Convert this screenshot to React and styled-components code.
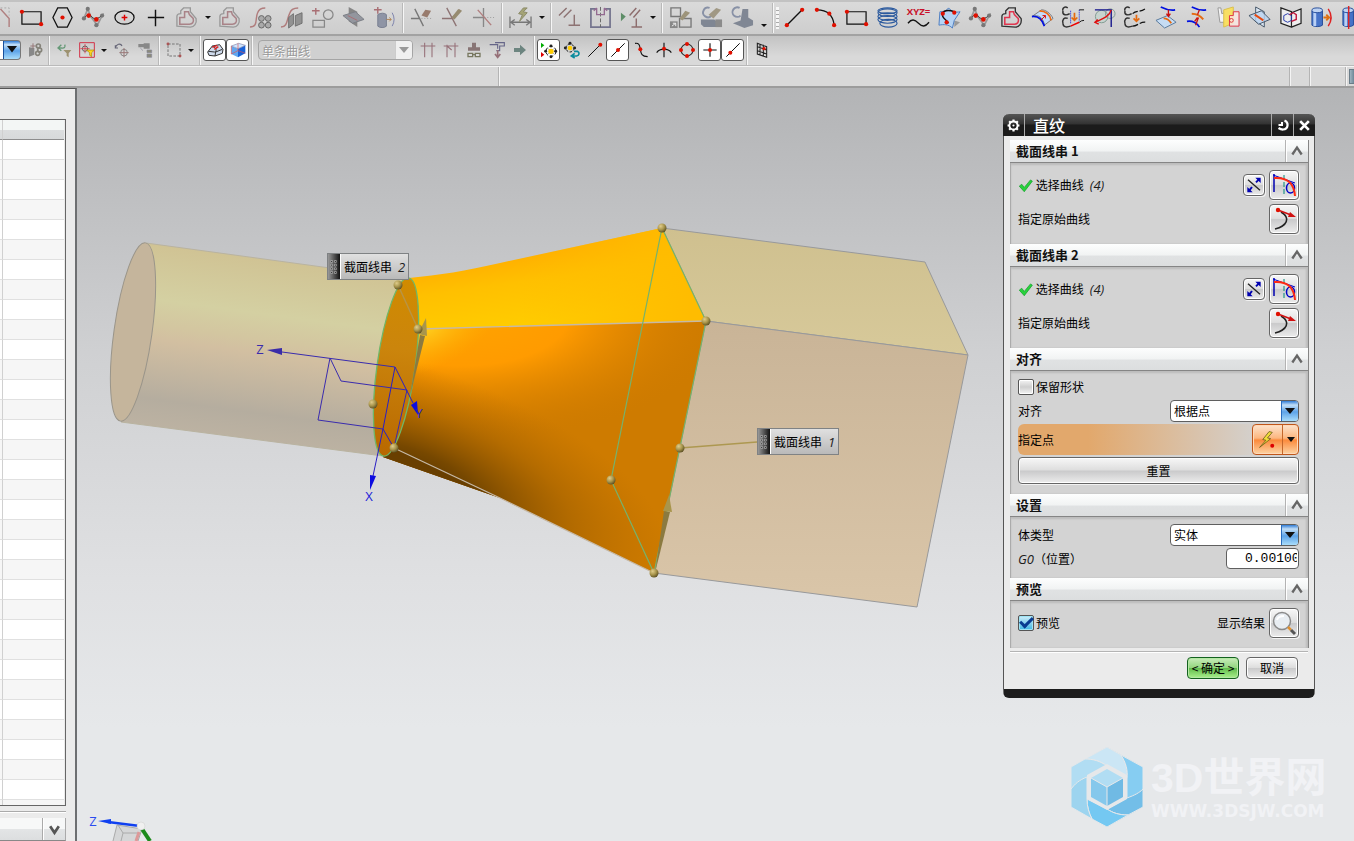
import React from 'react';
import styled, { createGlobalStyle, css } from 'styled-components';

const uiFont = '"Liberation Sans", "Noto Sans CJK SC", sans-serif';
const cjkFont = '"Noto Sans CJK SC", "Liberation Sans", sans-serif';
const latinFont = '"Open Sans", "Noto Sans", sans-serif';

const GlobalStyle = createGlobalStyle`
  * { box-sizing: border-box; }
  body {
    margin: 0;
    font-family: ${uiFont};
    font-size: 12px;
    color: #000;
    overflow: hidden;
  }
  button, input, select { font: inherit; color: inherit; }
`;

/* ---------- frame ---------- */

const Page = styled.div`
  display: flex;
  flex-direction: column;
  height: 100vh;
  background: #d9d9d9;
`;
const Toolbar = styled.div`
  display: flex;
  align-items: center;
  flex: none;
  height: 36px;
  padding-bottom: 1px;
  overflow: hidden;
  border-top: 2px solid #c2c2c2;
  border-bottom: 2px solid #a2a2a2;
  background: linear-gradient(#dadada, #cdcdcd);
`;
const SelectionBar = styled(Toolbar)`
  height: 30px;
  border-top: 0;
  border-bottom: 1px solid #bababa;
  background: linear-gradient(#c3c3c3, #d9d9d9 70%);
`;
const CueLine = styled.div`
  display: flex;
  flex: none;
  height: 22px;
  border-top: 1px solid #f4f4f4;
  border-bottom: 2px solid #9c9c9c;
  background: #d9d9d9;
`;
const CueCell = styled.div`
  flex: ${({ $width }) => ($width ? `0 0 ${$width}px` : '1')};
  overflow: hidden;
  border-right: 1px solid #f4f4f4;
  box-shadow: inset -1px 0 #b4b4b4;
`;
const CueButton = styled.button`
  width: 5px;
  margin: 2px 0 2px 2px;
  padding: 0;
  border: 1px solid #6a7c88;
  border-right: 0;
  background: linear-gradient(90deg, #9fb4c0, #6d8797);
`;
const Tool = styled.button`
  display: flex;
  flex: none;
  align-items: center;
  justify-content: center;
  width: 31px;
  height: 28px;
  padding: 0;
  border: 0;
  background: none;
  ${({ $edge }) => $edge && css`margin-left: -15px;`}
`;
const SmallTool = styled(Tool)`
  width: 23px;
  height: 22px;
  ${({ $pressed }) => $pressed && css`
    border: 1px solid #555;
    border-radius: 3px;
    background: #fff;
  `}
`;
const DropArrow = styled.button`
  flex: none;
  width: 12px;
  height: 28px;
  padding: 0;
  border: 0;
  background: none;
  &::after {
    content: '';
    display: block;
    margin: ${({ $low }) => ($low ? '16px' : '0')} auto 0;
    width: 0;
    border: 3px solid transparent;
    border-top-color: #111;
    border-bottom: 0;
  }
`;
const Separator = styled.span`
  flex: none;
  width: 2px;
  height: 30px;
  margin: 0 2px;
  border-left: 1px solid #b9b9b9;
  border-right: 1px solid #f6f6f6;
`;
const Grip = styled.span`
  flex: none;
  width: 3px;
  height: 22px;
  background: repeating-linear-gradient(#f6f6f6 0 3px, #aaa 3px 4px);
`;
const ComboEnd = styled.button`
  flex: none;
  width: 21px;
  height: 20px;
  margin-right: 2px;
  padding: 0 0 0 3px;
  border: 1px solid #777;
  border-left: 0;
  border-radius: 0 4px 4px 0;
  background: linear-gradient(90deg, #fff 3px, #174f9c 3px 4px, transparent 4px), linear-gradient(#2f7cd6, #c2def6 20%, #5da3e8 55%, #a9ddfb);
`;

/* ---------- navigator ---------- */

const Workspace = styled.div`
  display: flex;
  flex: 1;
  min-height: 0;
`;
const Sidebar = styled.aside`
  display: flex;
  flex: none;
  flex-direction: column;
  width: 77px;
  border-top: 1px solid #555;
  border-right: 2px solid #6d6f71;
  background: #ebebeb;
`;
const TreeBox = styled.div`
  flex: 1;
  width: 66px;
  min-height: 0;
  margin-top: 30px;
  overflow: hidden;
  border: 1px solid #666;
  border-left: 0;
`;
const Tree = styled.table`
  width: 64px;
  border-collapse: separate;
  border-spacing: 0;
  table-layout: fixed;
  th, td {
    height: 20px;
    padding: 0;
    border-bottom: 1px solid #e0e0e0;
  }
  th {
    border-bottom-color: #8d8d8d;
    background: linear-gradient(#f3f6f5 50%, #dcdedf 50%, #d7d9da);
  }
  th:first-child, td:first-child {
    width: 3px;
    border-right: 1px solid #d0d0d0;
  }
  tbody tr { background: #fff; }
  tbody tr:nth-child(even) { background: #f6f6f6; }
`;
const SidebarLine = styled.div`
  width: 66px;
  height: 2px;
  margin-top: 5px;
  border-top: 1px solid #aaa;
  border-bottom: 1px solid #fff;
`;
const SectionBar = styled.button`
  display: flex;
  justify-content: flex-end;
  width: 66px;
  height: 23px;
  margin-top: 5px;
  padding: 0;
  border: 0;
  border-right: 1px solid #aaa;
  border-bottom: 1px solid #888;
  background: linear-gradient(#f7f8f8 50%, #e3e5e6 50%, #dcdedf);
`;
const ChevronCell = styled.span`
  display: flex;
  align-items: center;
  justify-content: center;
  width: 23px;
  height: 100%;
  border-left: 1px solid #aaa;
  box-shadow: inset 1px 0 #fff;
`;

/* ---------- viewport ---------- */

const Viewport = styled.main`
  position: relative;
  flex: 1;
  min-width: 0;
  overflow: hidden;
  background: linear-gradient(#b3b4b6, #cfd0d2 35%, #dfe0e2 65%, #e6e8ea 85%, #e6e8ea);
`;
const Scene = styled.svg`
  position: absolute;
  top: 0;
  left: 0;
  font-family: ${latinFont};
`;
const Triad = styled.svg`
  position: absolute;
  bottom: 0;
  left: 0;
  font-family: ${latinFont};
`;
const SceneLabel = styled.div`
  position: absolute;
  top: ${({ $y }) => $y}px;
  left: ${({ $x }) => $x}px;
  display: flex;
  align-items: center;
  gap: 3px;
  width: 82px;
  height: 27px;
  border: 1px solid #7f8284;
  font-family: ${cjkFont};
  line-height: 24px;
  white-space: nowrap;
  background: linear-gradient(#e0e0e0, #b9b9b9);
`;
const LabelGrip = styled.svg`
  flex: none;
  border-right: 1px solid #fff;
  background: linear-gradient(90deg, #999, #111);
`;
const Num = styled.em`
  margin-left: ${({ $gap }) => $gap || 0}px;
  font-family: ${latinFont};
  font-size: 13px;
  color: #1c1c1c;
`;
const Watermark = styled.div`
  position: absolute;
  right: 24px;
  bottom: 13px;
  display: flex;
  align-items: center;
  gap: 8px;
  color: #f1f2f5;
`;
const WatermarkText = styled.div`
  width: 179px;
  font-weight: 700;
  white-space: nowrap;
`;
const WatermarkName = styled.div`
  font-size: 41px;
  line-height: 47px;
`;
const WatermarkUrl = styled.div`
  font-family: "DejaVu Sans", sans-serif;
  font-size: 17px;
  line-height: 18px;
`;

/* ---------- dialog ---------- */

const Dialog = styled.section`
  position: absolute;
  top: 26px;
  right: 39px;
  width: 312px;
  border: 1px solid #555;
  border-top: 0;
  border-bottom: 9px solid #1d1d1d;
  border-radius: 6px;
  background: #ebebeb;
  font-family: ${cjkFont};
  line-height: 18px;
`;
const TitleBar = styled.header`
  display: flex;
  align-items: center;
  height: 22px;
  margin: 0 -1px;
  border-radius: 6px 6px 0 0;
  color: #fff;
  background: linear-gradient(#555, #333 45%, #1b1b1b 50%, #1b1b1b);
`;
const Title = styled.h1`
  flex: 1;
  margin: 0;
  padding-left: 8px;
  font-size: 16px;
  font-weight: 500;
  line-height: 20px;
`;
const TitleButton = styled.button`
  display: flex;
  align-items: center;
  justify-content: center;
  width: 22px;
  height: 22px;
  padding: 0;
  border: 0;
  background: none;
  border-left: ${({ $line }) => ($line === 'left' ? '1px solid #aaa' : '0')};
  border-right: ${({ $line }) => ($line === 'right' ? '1px solid #aaa' : '0')};
`;
const Groups = styled.div`
  margin: 4px 5px 0 6px;
  border-right: 1px solid #858585;
`;
const GroupHeader = styled.h2`
  display: flex;
  align-items: center;
  justify-content: space-between;
  height: 23px;
  margin: 0;
  padding-left: 6px;
  border-bottom: 1px solid #858585;
  font-size: 13px;
  font-weight: 700;
  color: #111;
  background: linear-gradient(#fdfefe, #f1f3f3 50%, #e0e2e3 55%, #dcdedf);
`;
const Fold = styled.button`
  display: flex;
  align-items: center;
  justify-content: center;
  width: 23px;
  height: 22px;
  padding: 0;
  border: 0;
  border-left: 1px solid #b3b3b3;
  box-shadow: inset 1px 0 #fff;
  background: none;
`;
const GroupBody = styled.div`
  display: flex;
  flex-direction: column;
  gap: ${({ $gap }) => $gap || 2}px;
  padding: ${({ $top }) => $top || 7}px 9px ${({ $bottom }) => $bottom || 10}px 7px;
  border-left: 1px solid #ababab;
  background: #d3d3d3;
  box-shadow: inset 0 2px 2px #bcbcbc, inset -2px 0 2px #bcbcbc;
`;
const Row = styled.div`
  display: flex;
  align-items: center;
  justify-content: space-between;
  height: ${({ $height }) => $height || 30}px;
`;
const PointRow = styled(Row)`
  border-radius: 6px;
  background: linear-gradient(90deg, #e2a86c 25%, #d3d3d3 88%);
`;
const Step = styled.span`
  display: flex;
  align-items: center;
`;
const Tools = styled.span`
  display: flex;
  align-items: center;
  gap: 4px;
`;
const buttonFace = css`
  border: 1px solid #666;
  border-radius: 4px;
  box-shadow: inset 0 0 0 1px #fff, 1px 1px #f2f2f2;
  background: linear-gradient(#f7f7f7, #dedede 48%, #cacacb 52%, #ececec);
`;
const IconButton = styled.button`
  ${buttonFace}
  display: flex;
  align-items: center;
  justify-content: center;
  width: ${({ $size }) => $size}px;
  height: ${({ $size }) => $size}px;
  padding: 0;
`;
const TextButton = styled.button`
  ${buttonFace}
  width: ${({ $wide }) => ($wide ? '100%' : '52px')};
  height: ${({ $wide }) => ($wide ? '27px' : '22px')};
  padding: 0;
  font-family: ${cjkFont};
  line-height: 18px;
  white-space: nowrap;
`;
const OkButton = styled(TextButton)`
  border-color: #14611f;
  background: linear-gradient(#c9ecbb, #93d67f 48%, #62bc4d 52%, #a9f08c);
  box-shadow: inset 0 0 0 1px #b4e8a3, 1px 1px #f2f2f2;
`;
const Check = styled.input`
  appearance: none;
  width: 16px;
  height: 16px;
  margin: 0 2px 0 0;
  border: 1px solid #555;
  border-radius: 2px;
  box-shadow: inset 0 0 0 1px #fff;
  background: linear-gradient(#f4f4f4, #cfcfcf 50%, #f4f4f4);
  &:checked {
    display: grid;
    place-items: center;
    box-shadow: inset 0 0 0 1px #9fe4f4;
    background: linear-gradient(#cfeefa, #3fb7e3);
  }
  &:checked::after {
    content: '';
    width: 10px;
    height: 5px;
    margin-top: -4px;
    border-left: 3px solid #0a3d91;
    border-bottom: 3px solid #0a3d91;
    transform: rotate(-45deg);
  }
`;
const SelectFrame = styled.span`
  display: flex;
  flex: none;
  width: ${({ $width }) => $width}px;
  height: ${({ $height }) => $height || 22}px;
  margin: 0 ${({ $margin }) => $margin || 0}px;
  overflow: hidden;
  border: 1px solid ${({ $off }) => ($off ? '#a5a5a5' : '#5f5f5f')};
  border-radius: 4px;
  background: ${({ $off }) => ($off ? '#d0d0d0' : '#fff')};
`;
const SelectBox = styled.select`
  appearance: none;
  flex: 1;
  min-width: 0;
  padding: 0 3px;
  border: 0;
  background: none;
  font-family: ${cjkFont};
  color: #000;
  opacity: 1;
  &:disabled {
    color: #999;
    text-shadow: 1px 1px #fff;
  }
`;
const SelectArrow = styled.span`
  display: flex;
  align-items: center;
  justify-content: center;
  width: 17px;
  border-left: 1px solid ${({ $off }) => ($off ? '#ccc' : '#2a6ec0')};
  background: ${({ $off }) => ($off ? '#f0f0f0' : 'linear-gradient(#2f7cd6, #c2def6 20%, #5da3e8 55%, #a9ddfb)')};
  &::after {
    content: '';
    border: 5px solid transparent;
    border-top: 6px solid ${({ $off }) => ($off ? '#999' : '#111')};
    border-bottom: 0;
  }
`;
const PointButton = styled.button`
  display: flex;
  align-items: center;
  width: 47px;
  height: 31px;
  padding: 0;
  border: 1px solid #c0561a;
  border-radius: 4px;
  box-shadow: inset 0 0 0 1px #ffd9b8;
  background: linear-gradient(#fde3cc, #fcb67f 45%, #fb8a3c 52%, #fdd3a4);
`;
const PointIcon = styled.span`
  display: flex;
  align-items: center;
  justify-content: center;
  width: 29px;
`;
const PointDrop = styled.span`
  flex: 1;
  height: 100%;
  padding-top: 12px;
  border-left: 1px solid #c4672b;
  &::after {
    content: '';
    display: block;
    width: 0;
    margin: 0 auto;
    border: 4px solid transparent;
    border-top: 5px solid #111;
    border-bottom: 0;
  }
`;
const NumberBox = styled.input`
  width: 73px;
  height: 21px;
  padding: 0 1px 0 18px;
  border: 1px solid #5f5f5f;
  border-radius: 4px;
  font-family: "Liberation Mono", monospace;
  font-size: 13px;
  background: #fff;
`;
const Actions = styled.footer`
  display: flex;
  justify-content: flex-end;
  gap: 7px;
  margin: 3px 6px 0;
  padding: 5px 10px 10px 0;
  border-top: 1px solid #b4b4b4;
  box-shadow: inset 0 1px #fff;
`;

/* ---------- icons, drawn on a 24 unit grid ---------- */

const Dot = ({ x, y, c = '#e01000', r = 2.2 }) => <circle cx={x} cy={y} r={r} fill={c} stroke="none" />;

const splineArt = (
  <>
    <path d="M2 13 6 3l3 8 7 9 5-10" stroke="#999" strokeWidth="1.800" />
    <path d="M2 13c4-5 6-5 8-2s7 4 12-3" stroke="#222" />
    <Dot x={2} y={13} c="#777" /><Dot x={6} y={3} c="#777" /><Dot x={15} y={20} c="#777" /><Dot x={21} y={10} c="#777" />
    <Dot x={7} y={10} r={2.4} /><Dot x={15} y={14} r={2.4} />
  </>
);
const offsetArt = (outer, inner) => (
  <>
    <path d="M2 21v-10c0-2 1-3 4-3V5l3-3h7v4l6 7c1 5-2 9-6 9z" stroke={outer} strokeWidth="1.400" />
    <path d="M5 19v-7h5V6h4l1 3 4 4c1 4-1 6-4 6z" stroke={inner} strokeWidth="1.600" />
  </>
);
const tube = (
  <>
    <path d="M2 5v15c2 2 9 2 11 0V5" fill="#4673c8" stroke="#234a99" />
    <path d="M5 6v15" stroke="#b9d0f5" strokeWidth="3" />
    <ellipse cx="7.500" cy="4.500" rx="5.500" ry="2.500" fill="#bdd2f2" stroke="#234a99" />
  </>
);
const wave = <path d="M1 5c-1 5 4 5 7 3M6 2C3 0 0 2 1 5M6 13c-4-2-6 2-5 5M1 18c0 5 5 4 8 3" stroke="#333" strokeWidth="1.500" />;

const icons = {
  corner: <><path d="M12 2h9v8" stroke="#aaa" strokeDasharray="2 2" /><path d="M12 3 21 13v9" stroke="#b08080" strokeWidth="1.500" /></>,
  rect: <><path d="M2 6h20v13H2z" stroke="#111" strokeWidth="1.300" /><Dot x={2} y={6} /><Dot x={22} y={19} /></>,
  hexagon: <><path d="M7 2h10l5 10-5 10H7L2 12z" stroke="#111" strokeWidth="1.300" /><Dot x={12} y={12} /></>,
  spline: splineArt,
  ellipse: <><ellipse cx="12" cy="12" rx="10" ry="7" stroke="#111" strokeWidth="1.300" /><path d="M12 9v6M9 12h6" stroke="#d00" strokeWidth="1.500" /></>,
  plus: <path d="M12 4v17M4 12h17" stroke="#111" strokeWidth="1.500" />,
  offsetOff: offsetArt('#999', '#a98388'),
  offset: offsetArt('#333', '#e0364f'),
  pattern: <><path d="M1 22c9 0 5-9 8-15 1-3 4-5 8-5" stroke="#b07d7d" strokeWidth="1.500" /><g fill="#aaa" stroke="#666"><circle cx="13" cy="13" r="3" /><circle cx="20" cy="13" r="3" /><circle cx="13" cy="20" r="3" /><circle cx="20" cy="20" r="3" /></g></>,
  project: <><path d="M1 22c7 0 6-8 9-14 1-4 4-6 9-6" stroke="#b07d7d" strokeWidth="1.500" /><path d="m9 12 5-4v11l-5 4zm7-2 7-3v11l-7 3z" fill="#929292" stroke="#707070" /></>,
  shapes: <><path d="M5 2v7M1 5h8" stroke="#a96f74" strokeWidth="1.500" /><circle cx="18" cy="9" r="5" stroke="#888" strokeWidth="1.300" /><path d="M2 15h12v7H2z" stroke="#888" strokeWidth="1.300" /></>,
  surfaceOff: <><path d="m7 1 9 5v16l-9-6z" fill="#868686" /><path d="m1 10 13-4 9 8-12 4z" fill="#93969e" stroke="#7a7d85" /><path d="m6 10 10 5" stroke="#a96f74" /></>,
  extrudeOff: <><path d="M5 1v7M1 4h8" stroke="#a96f74" strokeWidth="1.500" /><path d="M5 9c3-2 7-2 9 0v12c-2 2-7 2-9 0z" fill="#8e94a5" stroke="#787e90" /><path d="M14 14h5m-2-2 2 2-2 2" stroke="#b08350" /><path d="M20 7q4 7 0 14" stroke="#7a7faa" /></>,
  erase: <><path d="M5 3 14 21M1 13h9" stroke="#777" strokeWidth="1.400" /><path d="M12 13h12" stroke="#999" strokeDasharray="1 2" /><path d="m12 10 4-6 6 1-4 7z" fill="#987b6d" /></>,
  pencil: <><path d="M6 2 16 21M1 13h10l9-9" stroke="#8d7373" strokeWidth="1.400" /><path d="m11 12 7-9 4 2-8 9z" fill="#968b70" /></>,
  cross: <><path d="M12 2v20M1 12h12" stroke="#888" strokeWidth="1.400" /><path d="M13 12h10" stroke="#999" strokeDasharray="1 2" /><path d="m6 4 14 16" stroke="#b07d7d" strokeWidth="1.400" /></>,
  dimension: <><path d="M1 11v12M23 11v12M2 17h20M6 14l-4 3 4 3m12-6 4 3-4 3" stroke="#777" strokeWidth="1.400" /><path d="m15 2-5 6 4 1-3 7 8-9-4-1 4-4z" fill="#a5a476" stroke="#8a8a68" /></>,
  constraint: <><path d="M1 10 9 2M6 12l8-8" stroke="#8d7373" strokeWidth="1.500" /><path d="M11 20h12M17 9v11" stroke="#8d7373" strokeWidth="1.500" /></>,
  mirror: <><path d="M7 3H2v19h20V3h-5" stroke="#74748e" strokeWidth="1.800" /><path d="M12 1v21" stroke="#666" strokeDasharray="4 2" /><path d="M8 2v7h8V2M5 5l3-3m8 0 3 3" stroke="#946b91" strokeWidth="1.400" /></>,
  auto: <><path d="M1 7v9l5-5z" fill="#5d8d67" /><path d="m10 10 7-8m-3 10 7-8M12 22h11M17 13v9" stroke="#8d6d6d" strokeWidth="1.500" /></>,
  convert: <><path d="M2 2h10v9H2zm9 11h12v9H11z" stroke="#777" strokeWidth="1.400" /><path d="m11 13 6-8 5 2-8 8z" fill="#9d947a" /><path d="M1 16h8v7H1z" fill="#888" /><path d="m3 21 4-3m-3 0h3v3" stroke="#eee" /></>,
  stampOff: <><path d="M10 2a5 5 0 1 0 2 8" stroke="#8891a6" strokeWidth="2" /><path d="m9 9 8-7 5 2-8 9z" fill="#a09884" /><path d="M1 14h14l3 3v5H4l-3-3z" fill="#7f8693" /><path d="M16 14h7v8h-7z" fill="#8b8b8b" /></>,
  stamp: <><path d="M9 2a5 5 0 1 0 1 8" stroke="#8891a6" strokeWidth="2" /><path d="M12 3h6v9l5 3v5l-9 3-12-5 8-3z" fill="#808794" /></>,
  line: <><path d="M4 20 20 4" stroke="#111" strokeWidth="1.400" /><Dot x={4} y={20} /><Dot x={20} y={4} /></>,
  arc: <><path d="M3 4c11 0 17 6 18 16" stroke="#111" strokeWidth="1.400" /><Dot x={3} y={4} /><Dot x={16} y={8} /><Dot x={21} y={20} /></>,
  helix: <g stroke="#2c5a9e" strokeWidth="1.200"><ellipse cx="12" cy="5" rx="10" ry="3" /><ellipse cx="12" cy="7" rx="10" ry="4" /><ellipse cx="12" cy="11" rx="10" ry="4" /><ellipse cx="12" cy="14" rx="10" ry="4" /><ellipse cx="13" cy="18" rx="9" ry="4" /></g>,
  law: <><text x="12" y="9" textAnchor="middle" fontSize="10" fontWeight="700" fontFamily="Open Sans, sans-serif" fill="#c8102a">XYZ=</text><path d="M1 18c4-5 7-4 11 0s7 4 11-1" stroke="#111" strokeWidth="1.400" /></>,
  surfaceCurve: <><path d="m17 15 6 2-6 5z" fill="#999" /><path d="M2 6c4 0 7-1 9-4 3 4 8 5 12 4l-6 9-2 8C11 19 6 19 1 20z" fill="#b5d3f3" stroke="#4c7cc0" /><path d="M17 6C8 3 3 6 5 11c1 3 4 3 6 7" stroke="#111" strokeWidth="1.500" /><Dot x={17} y={7} /><Dot x={5} y={8} /><Dot x={9} y={17} /></>,
  offsetSurface: <><path d="M1 11C8 8 13 13 14 20l9-7C20 7 15 4 11 4z" fill="#c4dbf7" stroke="#777" /><path d="M1 11c7-1 11 4 13 10" stroke="#0010e0" strokeWidth="1.800" /><path d="M9 5c6 0 11 4 12 10" stroke="#f06a10" strokeWidth="1.800" /><path d="m10 15 5-5m-3 0h3v3" stroke="#d00" /></>,
  bridge: <>{wave}<path d="m9 21 9-4" stroke="#e00" strokeWidth="1.600" /><path d="M9 5v14m9-15v12" stroke="#0010e0" strokeDasharray="1 1" /><path d="M13 7v7m-3-2 3 3 3-3" stroke="#e56a10" strokeWidth="1.800" /><path d="M18 4h5m-5 13q2-2 5-2" stroke="#111" /></>,
  combine: <><circle cx="9" cy="11" r="6.500" fill="#c8d4cf" stroke="#7f9a90" /><circle cx="18" cy="8" r="5" stroke="#7f9a90" /><path d="M2 4h17v18" stroke="#10108a" strokeWidth="1.400" /><path d="M2 17c6-3 15-5 17-13M5 14l-3 3 4 2" stroke="#d11" strokeWidth="1.500" /></>,
  join: <>{wave}<path d="M9 8c4-4 7-1 13-5M9 21c5 0 8-5 14-4" stroke="#111" strokeWidth="1.300" strokeDasharray="6 2" /><path d="M13 9v6m-3-2 3 3 3-3" stroke="#e56a10" strokeWidth="1.800" /></>,
  projectCurve: <><path d="m1 15 12-5 9 7-12 6z" fill="#c6dcf3" stroke="#56779b" /><path d="M9 13c4 0 6 2 8 5" stroke="#e56a10" strokeWidth="1.800" /><path d="M6 1c4 2 9 4 15 3" stroke="#0010e0" strokeWidth="1.800" /><path d="M14 4v7m-2-3 2 3 2-3" stroke="#c11" strokeWidth="1.400" /></>,
  combineCurve: <><path d="M6 1c4 2 9 4 15 3M1 16c6-1 11 2 13 6" stroke="#0010e0" strokeWidth="1.700" /><path d="M6 8c5 0 9 2 12 6" stroke="#e56a10" strokeWidth="2" /><path d="M14 4 12 9m-2 11 3-8M9 16l3-4" stroke="#c11" strokeWidth="1.400" /></>,
  mirrorCurve: <><path d="M1 2h3l1 6 3-1v10H3z" fill="#f4f4f4" stroke="#999" /><path d="m7 4 10-3v17L7 22z" fill="#f8df62" stroke="#d8bf4d" /><path d="M13 10h4V6h6v15H13z" fill="#fbe9e4" fillOpacity=".8" stroke="#dd3344" /><circle cx="15" cy="15" r="2" stroke="#dd3344" /></>,
  intersect: <><path d="m8 1 9 5v16l-9-6z" fill="#d9e6f3" stroke="#456" /><path d="m1 10 13-5 9 9-12 5z" fill="#bcd5f0" stroke="#456" fillOpacity=".8" /><path d="m7 9 9 6" stroke="#e54a10" strokeWidth="2" /></>,
  section: <><path d="M2 2 13 6v16L2 18zm11 5 10-4v15l-10 4" fill="#eee" stroke="#222" strokeWidth="1.300" /><path d="m5 10 4-2 4 2v5l-4 2-4-2z" stroke="#2338aa" /><path d="m11 9 4-2 3 2v5l-5 2" stroke="#c2183e" strokeWidth="1.500" /></>,
  extract: <>{tube}<path d="M14 12h6m-3-3 3 3-3 3" stroke="#e07010" strokeWidth="2" /><path d="M19 3q6 9 0 18" stroke="#d22" strokeWidth="1.500" /></>,
  tubeCut: <>{tube}<path d="M8 0v24" stroke="#d22" strokeWidth="1.500" /></>,
  // selection bar
  layers: <><path d="M3 8v14l8-3V9z" fill="#888" /><path d="M9 2v8M5 6h8" stroke="#967878" strokeWidth="1.500" /><g stroke="#85837a" strokeWidth="2.500"><circle cx="17" cy="6" r="3" /><circle cx="19" cy="12" r="3" /><circle cx="16" cy="17" r="3" /></g></>,
  filterBack: <><path d="M13 4c2 4-1 6-5 5H4m4-5L3 9l5 4" stroke="#697" strokeWidth="2" /><path d="M11 12h12l-4 5v6l-3-2v-4z" fill="#9d9270" /></>,
  filterSnap: <><path d="M1 1h22v22H1z" stroke="#d23349" strokeWidth="1.500" /><circle cx="9" cy="10" r="4" stroke="#333" /><path d="M9 3v14M2 10h14" stroke="#d23" /><path d="M11 12h12l-4 4v6l-3-2v-4z" fill="#ffd71c" stroke="#a98300" /></>,
  undoSnap: <><path d="M2 9c1-6 8-8 10-3M2 5v4h4" stroke="#667" strokeWidth="1.700" /><circle cx="15" cy="16" r="5" stroke="#888" strokeWidth="1.500" /><path d="M15 9v14M8 16h14" stroke="#977" strokeWidth="1.500" /></>,
  paint: <><path d="M2 3h10v5H2zm8-1h9v8h-9z" fill="#888" /><path d="m5 9 4 4M15 12h7v4h-7zm0 6h7v5h-7z" stroke="#889" fill="#8a8a7a" /></>,
  lasso: <><path d="M3 3h18v18H3z" stroke="#777" strokeWidth="1.500" strokeDasharray="4 2" /><Dot x={3} y={3} c="#a55" /><Dot x={21} y={21} c="#a55" /></>,
  clipPart: <><path d="M1 15 8 6l11-2 5 7-1 6-11 4-9-1z" fill="#cfdbed" stroke="#333" strokeWidth="1.500" /><path d="m12 21 1-6 10-4M2 14l9 1 2 0M8 6c4 2 7 4 5 9" stroke="#333" strokeWidth="1.500" /><path d="m8 8 7-3m-4 6 6-4" stroke="#d22" strokeWidth="2" /></>,
  cube: <><path d="m2 6 10 4v13L2 18z" fill="#63a6ee" /><path d="m12 10 11-5v12l-11 6z" fill="#1a63d8" /><path d="M2 6 13 2l10 3-11 5z" fill="#cfe6ff" stroke="#88a" /><path d="M2 6v12l10-5 11 4M12 2v11" stroke="#d55" /></>,
  grid: <path d="M7 1v22M18 1v22M1 6h22" stroke="#967078" strokeWidth="1.600" />,
  gridTick: <path d="M6 4v19M18 1v22M1 6h22M6 6l7 6" stroke="#967078" strokeWidth="1.600" />,
  parts: <><path d="M9 1h6v7h6v5H3V8h6z" fill="#887575" /><path d="M3 17h7v5H3zm11 0h7v5h-7zm-4 2h4" stroke="#77775f" strokeWidth="2" /></>,
  paste: <><path d="M1 4h12v6M9 1h14v5h-7v7h-5" stroke="#668" strokeWidth="1.700" /><path d="M13 12v9m-4-3 4 5 4-5" stroke="#967078" strokeWidth="2.500" /></>,
  next: <path d="M3 9h9V4l9 8-9 8v-5H3z" fill="#6d8580" />,
  snapOn: <><path d="M0 1v8l5-4z" fill="#0a0" /><path d="M0 15v8l5-4z" fill="#d00" /><circle cx="15" cy="14" r="7.500" stroke="#222" strokeWidth="1.500" strokeDasharray="5 3" /><path d="m11 10 8 8m0-8-8 8" stroke="#888" strokeWidth="1.500" /><Dot x={15} y={6} c="#222" /><Dot x={7} y={14} c="#222" /><Dot x={22} y={14} c="#222" /><Dot x={15} y={22} c="#222" /><Dot x={15} y={14} c="#fc0" r={4} /></>,
  snapAll: <><circle cx="9" cy="9" r="6" stroke="#222" strokeWidth="1.500" strokeDasharray="4 2" /><Dot x={9} y={2} c="#222" /><Dot x={2} y={9} c="#222" /><Dot x={16} y={9} c="#222" /><Dot x={9} y={9} c="#fc0" r={3.5} /><path d="M15 14h5c4 2 3 6-1 7h-6m3-4-5 4 5 3" stroke="#0a8a9c" strokeWidth="2.500" /></>,
  endPoint: <><path d="M2 22 20 4" stroke="#111" strokeWidth="1.500" /><Dot x={20} y={4} r={3} /></>,
  midPoint: <><path d="M2 22 22 2" stroke="#111" strokeWidth="1.500" /><Dot x={12} y={12} r={3} /></>,
  control: <><path d="M3 2c7-1 7 4 8 9s1 11 11 11" stroke="#111" strokeWidth="1.700" /><Dot x={11} y={11} r={3} /></>,
  crossing: <><path d="M12 1v22M1 16c5-7 17-7 22 0" stroke="#111" strokeWidth="1.700" /><Dot x={12} y={10} r={3} /></>,
  centre: <><circle cx="12" cy="12" r="9" stroke="#333" strokeWidth="1.600" /><Dot x={12} y={3} r={3} /><Dot x={12} y={21} r={3} /><Dot x={3} y={12} r={3} /><Dot x={21} y={12} r={3} /></>,
  point: <><path d="M12 2v20M2 12h20" stroke="#111" strokeWidth="1.700" /><Dot x={12} y={12} r={3} /></>,
  onCurve: <><path d="M2 22 22 2" stroke="#111" strokeWidth="1.500" /><Dot x={8} y={16} r={3} /></>,
  mesh: <><path d="m5 2 14 5v16L5 18zM9 3v17m5-16v18M5 7l14 5M5 13l14 5" stroke="#222" strokeWidth="1.600" /><Dot x={15} y={10} r={2.5} /></>,
  // dialog
  reverse: <><path d="m3 4 18 16" stroke="#222" strokeWidth="2" /><path d="M22 1h-8l8 8zM2 23h8l-8-8z" fill="#0000b0" /><path d="m15 8 4-4M5 20l4-5" stroke="#0000b0" strokeWidth="3" /></>,
  curveRule: <><path d="M2 1v18" stroke="#0000b0" strokeWidth="1.500" /><path d="m1 2 22 8" stroke="#0000c8" /><path d="M12 2v20" stroke="#087" strokeDasharray="5 2" /><ellipse cx="18.500" cy="15" rx="4" ry="5" stroke="#0000c8" strokeWidth="1.500" /><path d="M2 5c13-1 20 5 21 18" stroke="#ff2a12" strokeWidth="2" /></>,
  origin: <><path d="M9 5c10 6 6 14-6 17" stroke="#222" strokeWidth="1.500" /><path d="m6 3 13 5" stroke="#d01010" strokeWidth="1.500" /><path d="m16 10 2-5 6 5z" fill="#d01010" /><Dot x={6} y={3} /></>,
  tick: <path d="m2 13 4-3 4 5L20 3l3 2-13 17z" fill="#28d13c" stroke="#0a9920" />,
  magnifier: <><circle cx="10" cy="10" r="8.500" fill="#e8edf2" stroke="#8a8a8a" strokeWidth="1.500" /><path d="M5 9c1-4 5-4 7-4" stroke="#fff" strokeWidth="2" /><path d="m16 16 3 3" stroke="#e09030" strokeWidth="2.500" /><path d="m19 19 4 4" stroke="#555" strokeWidth="3" /></>,
  bolt: <><path d="m14 2-8 10 4 1-8 9L16 11l-4-1 6-7z" fill="#f0dc3a" stroke="#665a1a" /><Dot x={18} y={20} c="#d00" r={2.500} /></>,
  gear: <><circle cx="12" cy="12" r="7.500" stroke="#fff" strokeWidth="3.500" /><path d="M12 1v4m0 14v4M1 12h4m14 0h4M4 4l3 3m10 10 3 3m0-16-3 3M7 17l-3 3" stroke="#fff" strokeWidth="4" /><Dot x={12} y={12} c="#fff" r={2} /></>,
  reset: <><path d="M15 3c9 4 8 17-3 18-4 0-6-1-9-3" stroke="#fff" strokeWidth="4.500" /><path d="M3 12h7V6" stroke="#fff" strokeWidth="4" /></>,
  close: <path d="m4 4 16 16M20 4 4 20" stroke="#fff" strokeWidth="5" />,
  up: <path d="m4 18 8-12 8 12" stroke="#666" strokeWidth="4" />,
  down: <path d="m4 6 8 12 8-12" stroke="#555" strokeWidth="5" />,
  caret: <path d="M2 6h20L12 19z" fill="#111" />,
};

const Glyph = ({ name, size = 24 }) => (
  <svg width={size} height={size} viewBox="0 0 24 24" fill="none" overflow="visible" aria-hidden="true">
    {icons[name]}
  </svg>
);

// '|' separator, 'v' drop arrow, '_' low drop arrow, ':' grip
const mainTools = [
  'corner', 'rect', 'hexagon', 'spline', 'ellipse', 'plus', 'offsetOff', 'v', 'offsetOff',
  'pattern', 'project', 'shapes', 'surfaceOff', 'extrudeOff', '|', 'erase', 'pencil', 'cross', '|',
  'dimension', 'v', '|', 'constraint', 'mirror', 'auto', 'v', '|', 'convert', 'stampOff', 'stamp', '_', '|', ':',
  'line', 'arc', 'rect', 'helix', 'law', 'surfaceCurve', 'spline', 'offset', 'offsetSurface', 'bridge',
  'combine', 'join', 'projectCurve', 'combineCurve', 'mirrorCurve', 'intersect', 'section', 'extract', 'tubeCut',
];
const filterTools = ['layers', '|', 'filterBack', 'filterSnap', 'v', 'undoSnap', 'paint', '|', 'lasso', 'v', '|', '+clipPart', '+cube', '|'];
const snapTools = [
  'grid', 'gridTick', 'parts', 'paste', 'next', '|', '+snapOn', 'snapAll', 'endPoint', '+midPoint',
  'control', 'crossing', 'centre', '+point', '+onCurve', '|', 'mesh',
];

const renderTools = (list, small) => list.map((item, i) => {
  if (item === '|') return <Separator key={i} />;
  if (item === ':') return <Grip key={i} />;
  if (item === 'v' || item === '_') return <DropArrow key={i} $low={item === '_'} aria-label="more" />;
  const name = item.replace('+', '');
  if (small) {
    return <SmallTool key={i} $pressed={item !== name} aria-label={name}><Glyph name={name} size={16} /></SmallTool>;
  }
  return <Tool key={i} $edge={i === 0} aria-label={name}><Glyph name={name} size={23} /></Tool>;
});

/* ---------- model ---------- */

const nodes = [[662, 228], [706, 321], [680, 448], [611, 480], [654, 573], [398, 285], [418, 329], [373, 404], [394, 448]];
const roofFace = 'M409 278C440 275 465 271 500 263L662 228 706 321 418 329z';
const frontFace = 'M418 329 706 321 654 573 500 498 383 457z';

const Model = () => (
  <Scene width="1000" height="640" viewBox="77 88 1000 640" fill="none">
    <defs>
      <linearGradient id="tube" gradientUnits="userSpaceOnUse" x1="270" y1="260" x2="246" y2="439">
        <stop offset="0" stopColor="#d0c394" />
        <stop offset=".3" stopColor="#d4d0a2" />
        <stop offset=".44" stopColor="#d3c6a0" />
        <stop offset=".52" stopColor="#d2bfa1" />
        <stop offset=".85" stopColor="#b5ad9f" />
        <stop offset="1" stopColor="#bcb2a2" />
      </linearGradient>
      <linearGradient id="roof" gradientUnits="userSpaceOnUse" x1="505" y1="255" x2="515" y2="326">
        <stop offset="0" stopColor="#ffae00" />
        <stop offset=".4" stopColor="#ffc000" />
        <stop offset="1" stopColor="#ffcc00" />
      </linearGradient>
      <linearGradient id="roofEnd" gradientUnits="userSpaceOnUse" x1="520" y1="0" x2="690" y2="0">
        <stop offset="0" stopColor="#ffbc00" stopOpacity="0" />
        <stop offset="1" stopColor="#ffbc00" />
      </linearGradient>
      <radialGradient id="shine" gradientUnits="userSpaceOnUse" cx="0" cy="0" r="1" gradientTransform="translate(455 312) rotate(2) scale(270 128)">
        <stop offset="0" stopColor="#ffa400" />
        <stop offset=".42" stopColor="#ff9b00" />
        <stop offset="1" stopColor="#d07b00" stopOpacity="0" />
      </radialGradient>
      <radialGradient id="shade" gradientUnits="userSpaceOnUse" cx="0" cy="0" r="1" gradientTransform="translate(400 482) rotate(18) scale(280 118)">
        <stop offset="0" stopColor="#4c2e00" />
        <stop offset=".3" stopColor="#6d4200" stopOpacity=".9" />
        <stop offset=".65" stopColor="#8d5400" stopOpacity=".4" />
        <stop offset="1" stopColor="#a86200" stopOpacity="0" />
      </radialGradient>
      <radialGradient id="glow" gradientUnits="userSpaceOnUse" cx="0" cy="0" r="1" gradientTransform="translate(425 328) rotate(-24) scale(80 42)">
        <stop offset="0" stopColor="#ffd020" />
        <stop offset="1" stopColor="#ffb000" stopOpacity="0" />
      </radialGradient>
      <linearGradient id="disc" x1="0" y1="0" x2="0" y2="1">
        <stop offset="0" stopColor="#d08b00" />
        <stop offset=".4" stopColor="#cb850c" />
        <stop offset="1" stopColor="#b86800" />
      </linearGradient>
      <linearGradient id="boxTop" x1="0" y1="0" x2="0" y2="1">
        <stop offset="0" stopColor="#cfc08f" />
        <stop offset="1" stopColor="#d7c99a" />
      </linearGradient>
      <linearGradient id="boxFront" x1="0" y1="0" x2="0" y2="1">
        <stop offset="0" stopColor="#c9b497" />
        <stop offset="1" stopColor="#dac6a9" />
      </linearGradient>
      <radialGradient id="ball" cx=".35" cy=".3" r=".8">
        <stop offset="0" stopColor="#e0cc8a" />
        <stop offset=".5" stopColor="#a8954c" />
        <stop offset="1" stopColor="#4e431b" />
      </radialGradient>
    </defs>

    <path d="M146 243 411 279 383 456 121 422z" fill="url(#tube)" />
    <path d="M146 243 411 279M121 422l262 34" stroke="#b9b3a0" />
    <ellipse cx="133" cy="332" rx="19" ry="90" transform="rotate(8 133 332)" fill="#c5b59c" stroke="#9a958a" />

    <path d="M662 228 925 262 968 355 706 321z" fill="url(#boxTop)" stroke="#98999b" />
    <path d="M706 321 968 355 917 607 654 573z" fill="url(#boxFront)" stroke="#98999b" />

    <path d={roofFace} fill="url(#roof)" />
    <path d={roofFace} fill="url(#roofEnd)" />
    <path d={frontFace} fill="#ce7b00" />
    <path d={frontFace} fill="url(#shine)" />
    <path d={frontFace} fill="url(#shade)" />
    <path d={frontFace} fill="url(#glow)" />
    <path d="M383 457 394 448 500 498z" fill="#693f00" />
    <path d="m418 329 288-8M394 448 500 498l154 75" stroke="#c6b9a6" strokeWidth="1.300" />
    <ellipse cx="396" cy="367" rx="19" ry="90" transform="rotate(8 396 367)" fill="url(#disc)" stroke="#6fb768" strokeWidth="1.300" />

    <path d="M706 321 662 228 611 480 654 573z" stroke="#76b26c" strokeWidth="1.200" />
    <path d="M398 285 418 329" stroke="#b99443" strokeWidth="1.500" />
    <path d="m680 448 77-6" stroke="#ad9850" strokeWidth="1.300" />
    <path d="M410 396 420 335 425 336z" fill="#8b7a40" />
    <path d="m418 334 8-16 1 18z" fill="#a8954c" />
    <path d="M655 573 664 511 670 512z" fill="#8b7a40" />
    <path d="m663 511 6-16 3 17z" fill="#a8954c" />

    <g stroke="#3a2cae">
      <path d="M282 352 395 367M330 358 318 420 383 429M330 358 341 381 407 390 395 443" />
      <path d="M395 367 383 429 373 476M395 367l18 36M383 429l11 19" stroke="#2a1fc4" />
    </g>
    <path d="m267 350 15-2v7z" fill="#3a2ca8" />
    <path d="m411 405 6-4 1 14z" fill="#0c0ce0" />
    <path d="m370 475 6 1-6 14z" fill="#0c0ce0" />
    <g fontSize="13" textAnchor="middle">
      <text x="260" y="354" fill="#3a2cae">Z</text>
      <text x="419" y="418" fill="#1c1cd8">Y</text>
      <text x="369" y="501" fill="#1c1cd8">X</text>
    </g>

    {nodes.map(([x, y]) => <circle key={`${x}-${y}`} cx={x} cy={y} r="4.500" fill="url(#ball)" />)}
  </Scene>
);

const Logo = () => (
  <svg width="72" height="82" viewBox="0 0 72 82" fill="none" stroke="#e6e8ea" aria-hidden="true">
    <path d="M36 1 72 21v40L36 81 0 61V21z" fill="#8ecdf0" stroke="none" />
    <path d="M14 13 36 1l14 8c5 8 7 15 6 24L36 20c-6-5-14-7-22-7z" fill="#cbe6f5" />
    <path d="M50 9 72 21v22c-3 4-8 8-16 11V33c1-9-1-16-6-24z" fill="#86cdf2" />
    <path d="M72 43v18L57 69c-9 0-15-2-21-6l20-11c8-3 12-5 16-9z" fill="#73bee8" />
    <path d="M57 69 36 81 21 73c-3-6-5-12-5-20l20 10c6 4 12 6 21 6z" fill="#74c8f2" />
    <path d="M21 73 0 61V43c3-6 8-10 16-14v24c0 8 2 14 5 20z" fill="#9dd4ef" />
    <path d="M0 43V21l14-8c8 0 15 2 22 7L16 31C8 34 4 38 0 43z" fill="#b1ddf3" />
    <path d="m36 18 20 11v24L36 64 16 53V29z" fill="#e6e8ea" stroke="none" />
    <path d="m36 23 16 9-16 9-16-9z" fill="#b1ddf3" stroke="none" />
    <path d="M20 32 36 41v19l-16-9z" fill="#85c8ec" stroke="none" />
    <path d="M52 32 36 41v19l16-9z" fill="#70bae4" stroke="none" />
    <path d="m20 32 16 9 16-9M36 41v19" />
  </svg>
);

const Label = ({ x, y, index }) => (
  <SceneLabel $x={x} $y={y}>
    <LabelGrip width="13" height="25" viewBox="0 0 13 25">
      {[6, 10, 14, 18].map(row => (
        <path key={row} d={`M3 ${row}h2v2H3zM7 ${row}h2v2H7z`} fill="#111" stroke="#ccc" strokeWidth=".7" />
      ))}
    </LabelGrip>
    <span>截面线串<Num $gap={6}>{index}</Num></span>
  </SceneLabel>
);

/* ---------- dialog parts ---------- */

const Group = ({ title, children, ...body }) => (
  <div>
    <GroupHeader>
      {title}
      <Fold aria-label="fold"><Glyph name="up" size={14} /></Fold>
    </GroupHeader>
    <GroupBody {...body}>{children}</GroupBody>
  </div>
);

const Select = ({ id, value, width, height, margin, off }) => (
  <SelectFrame $width={width} $height={height} $margin={margin} $off={off}>
    <SelectBox id={id} disabled={off} defaultValue={value} aria-label={id}>
      <option>{value}</option>
    </SelectBox>
    <SelectArrow $off={off} />
  </SelectFrame>
);

const SectionString = ({ title }) => (
  <Group title={title} $gap={4}>
    <Row>
      <Step>
        <Glyph name="tick" size={15} />
        <span>&nbsp;选择曲线</span>
        <Num $gap={6}>(4)</Num>
      </Step>
      <Tools>
        <IconButton $size={22} aria-label="reverse"><Glyph name="reverse" size={16} /></IconButton>
        <IconButton $size={30} aria-label="curve"><Glyph name="curveRule" /></IconButton>
      </Tools>
    </Row>
    <Row>
      <span>指定原始曲线</span>
      <IconButton $size={30} aria-label="origin"><Glyph name="origin" /></IconButton>
    </Row>
  </Group>
);

const RuledDialog = () => (
  <Dialog>
    <TitleBar>
      <TitleButton $line="right" aria-label="options"><Glyph name="gear" size={13} /></TitleButton>
      <Title>直纹</Title>
      <TitleButton $line="left" aria-label="reset"><Glyph name="reset" size={12} /></TitleButton>
      <TitleButton $line="left" aria-label="close"><Glyph name="close" size={13} /></TitleButton>
    </TitleBar>
    <Groups>
      <SectionString title="截面线串 1" />
      <SectionString title="截面线串 2" />
      <Group title="对齐" $top={5}>
        <Row $height={22}>
          <Step>
            <Check type="checkbox" id="keep" />
            <label htmlFor="keep">保留形状</label>
          </Step>
        </Row>
        <Row $height={22}>
          <label htmlFor="align">对齐</label>
          <Select id="align" value="根据点" width={129} />
        </Row>
        <PointRow $height={31}>
          <span>指定点</span>
          <PointButton aria-label="point">
            <PointIcon><Glyph name="bolt" size={19} /></PointIcon>
            <PointDrop />
          </PointButton>
        </PointRow>
        <TextButton $wide>重置</TextButton>
      </Group>
      <Group title="设置" $bottom={9}>
        <Row $height={22}>
          <label htmlFor="body">体类型</label>
          <Select id="body" value="实体" width={129} />
        </Row>
        <Row $height={21}>
          <label htmlFor="g0"><Num>G0</Num>（位置）</label>
          <NumberBox id="g0" defaultValue="0.0010000" />
        </Row>
      </Group>
      <Group title="预览">
        <Row>
          <Step>
            <Check type="checkbox" id="preview" defaultChecked />
            <label htmlFor="preview">预览</label>
          </Step>
          <Tools>
            <span>显示结果</span>
            <IconButton $size={30} aria-label="show"><Glyph name="magnifier" size={24} /></IconButton>
          </Tools>
        </Row>
      </Group>
    </Groups>
    <Actions>
      <OkButton>&lt; 确定 &gt;</OkButton>
      <TextButton>取消</TextButton>
    </Actions>
  </Dialog>
);

const App = () => (
  <Page>
    <GlobalStyle />
    <Toolbar>{renderTools(mainTools)}</Toolbar>
    <SelectionBar>
      <ComboEnd aria-label="type filter"><Glyph name="caret" size={12} /></ComboEnd>
      {renderTools(filterTools, true)}
      <Select id="curve-rule" value="单条曲线" width={155} height={20} margin={3} off />
      {renderTools(snapTools, true)}
    </SelectionBar>
    <CueLine>
      <CueCell $width={500} />
      <CueCell />
      <CueCell $width={20} />
      <CueCell $width={36} />
      <CueButton aria-label="full screen" />
    </CueLine>
    <Workspace>
      <Sidebar>
        <TreeBox>
          <Tree>
            <thead><tr><th /><th /></tr></thead>
            <tbody>
              {Array.from({ length: 34 }, (_, i) => <tr key={i}><td /><td /></tr>)}
            </tbody>
          </Tree>
        </TreeBox>
        <SidebarLine />
        <SectionBar aria-label="dependencies">
          <ChevronCell><Glyph name="down" size={13} /></ChevronCell>
        </SectionBar>
      </Sidebar>
      <Viewport>
        <Model />
        <Label x={250} y={165} index="2" />
        <Label x={680} y={340} index="1" />
        <Triad width="90" height="30" viewBox="77 811 90 30" fill="none">
          <path d="m113 841 4-16 25 4-4 12" fill="#d5d6d7" stroke="#aaa" />
          <path d="m118 825 5 8h16m-16 0-2 8" stroke="#aaa" />
          <path d="m139 832-3 9" stroke="#d99" strokeWidth="3" />
          <path d="m108 822 32 4" stroke="#1040f0" strokeWidth="2.500" />
          <path d="m98 821 13-2v5z" fill="#1040f0" />
          <path d="m142 829 8 12" stroke="#1b8a1b" strokeWidth="4" />
          <circle cx="141" cy="826" r="4" fill="#f0f0f0" stroke="#ccc" strokeWidth=".5" />
          <text x="93" y="826" textAnchor="middle" fontSize="13" fill="#2a4cf0">Z</text>
        </Triad>
        <RuledDialog />
        <Watermark>
          <Logo />
          <WatermarkText>
            <WatermarkName>3D世界网</WatermarkName>
            <WatermarkUrl>WWW.3DSJW.COM</WatermarkUrl>
          </WatermarkText>
        </Watermark>
      </Viewport>
    </Workspace>
  </Page>
);

export default App;
